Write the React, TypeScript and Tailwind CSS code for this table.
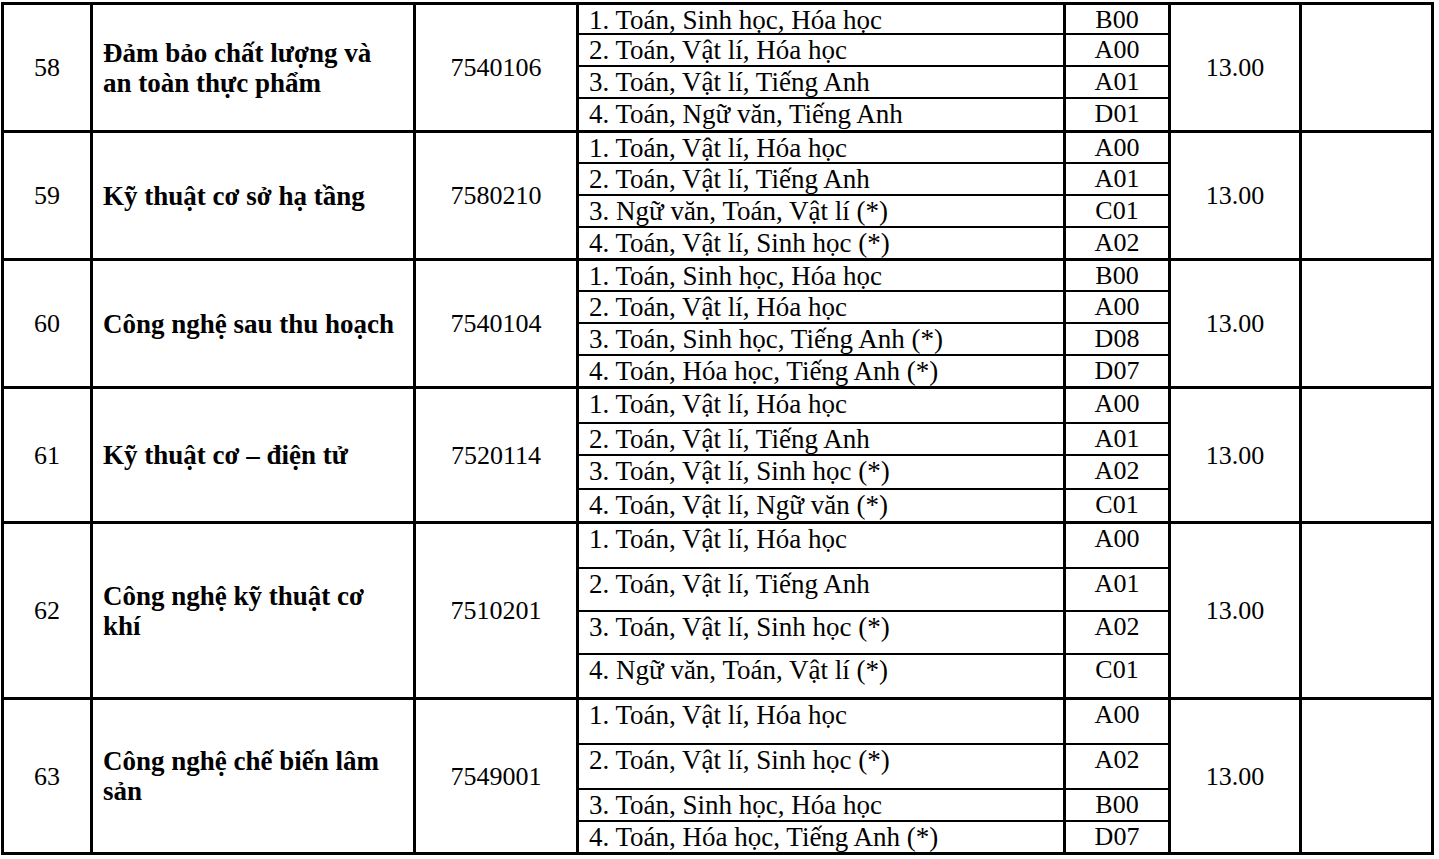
type Row = {
  no: string
  name: string[]
  code: string
  score: string
  height: number
  subs: { text: string; group: string; h?: number }[]
}

const rows: Row[] = [
  {
    no: '58',
    name: ['Đảm bảo chất lượng và', 'an toàn thực phẩm'],
    code: '7540106',
    score: '13.00',
    height: 128,
    subs: [
      { text: '1. Toán, Sinh học, Hóa học', group: 'B00', h: 30 },
      { text: '2. Toán, Vật lí, Hóa học', group: 'A00', h: 32 },
      { text: '3. Toán, Vật lí, Tiếng Anh', group: 'A01', h: 32 },
      { text: '4. Toán, Ngữ văn, Tiếng Anh', group: 'D01' },
    ],
  },
  {
    no: '59',
    name: ['Kỹ thuật cơ sở hạ tầng'],
    code: '7580210',
    score: '13.00',
    height: 128,
    subs: [
      { text: '1. Toán, Vật lí, Hóa học', group: 'A00', h: 31 },
      { text: '2. Toán, Vật lí, Tiếng Anh', group: 'A01', h: 32 },
      { text: '3. Ngữ văn, Toán, Vật lí (*)', group: 'C01', h: 32 },
      { text: '4. Toán, Vật lí, Sinh học (*)', group: 'A02' },
    ],
  },
  {
    no: '60',
    name: ['Công nghệ sau thu hoạch'],
    code: '7540104',
    score: '13.00',
    height: 128,
    subs: [
      { text: '1. Toán, Sinh học, Hóa học', group: 'B00', h: 31 },
      { text: '2. Toán, Vật lí, Hóa học', group: 'A00', h: 32 },
      { text: '3. Toán, Sinh học, Tiếng Anh (*)', group: 'D08', h: 32 },
      { text: '4. Toán, Hóa học, Tiếng Anh (*)', group: 'D07' },
    ],
  },
  {
    no: '61',
    name: ['Kỹ thuật cơ – điện tử'],
    code: '7520114',
    score: '13.00',
    height: 135,
    subs: [
      { text: '1. Toán, Vật lí, Hóa học', group: 'A00', h: 35 },
      { text: '2. Toán, Vật lí, Tiếng Anh', group: 'A01', h: 32 },
      { text: '3. Toán, Vật lí, Sinh học (*)', group: 'A02', h: 34 },
      { text: '4. Toán, Vật lí, Ngữ văn (*)', group: 'C01' },
    ],
  },
  {
    no: '62',
    name: ['Công nghệ kỹ thuật cơ', 'khí'],
    code: '7510201',
    score: '13.00',
    height: 176,
    subs: [
      { text: '1. Toán, Vật lí, Hóa học', group: 'A00', h: 45 },
      { text: '2. Toán, Vật lí, Tiếng Anh', group: 'A01', h: 43 },
      { text: '3. Toán, Vật lí, Sinh học (*)', group: 'A02', h: 43 },
      { text: '4. Ngữ văn, Toán, Vật lí (*)', group: 'C01' },
    ],
  },
  {
    no: '63',
    name: ['Công nghệ chế biến lâm', 'sản'],
    code: '7549001',
    score: '13.00',
    height: 155,
    subs: [
      { text: '1. Toán, Vật lí, Hóa học', group: 'A00', h: 45 },
      { text: '2. Toán, Vật lí, Sinh học (*)', group: 'A02', h: 45 },
      { text: '3. Toán, Sinh học, Hóa học', group: 'B00', h: 32 },
      { text: '4. Toán, Hóa học, Tiếng Anh (*)', group: 'D07' },
    ],
  },
]

function App() {
  return (
    <div className="min-h-screen bg-white pl-[1px] pt-[2px] text-black font-['Liberation_Serif',_'Times_New_Roman',_serif] text-[26px]">
      <div className="w-[1433px] border-l-[3px] border-t-[3px] border-black">
        {rows.map((row) => (
          <div
            key={row.no}
            className="flex border-b-[3px] border-black box-border"
            style={{ height: row.height }}
          >
            <div className="w-[89px] shrink-0 border-r-[3px] border-black flex items-center justify-center">
              {row.no}
            </div>
            <div className="w-[323px] shrink-0 border-r-[3px] border-black flex items-center pl-[10px] font-bold text-[27px] leading-[30px]">
              <div>
                {row.name.map((line) => (
                  <div key={line}>{line}</div>
                ))}
              </div>
            </div>
            <div className="w-[163px] shrink-0 border-r-[3px] border-black flex items-center justify-center">
              {row.code}
            </div>
            <div className="w-[592px] shrink-0 flex flex-col">
              {row.subs.map((sub, i) => {
                const last = i === row.subs.length - 1
                return (
                  <div
                    key={sub.text}
                    className={
                      'flex box-border ' +
                      (last ? 'flex-1' : 'border-b-2 border-black')
                    }
                    style={sub.h ? { height: sub.h } : undefined}
                  >
                    <div className="w-[487px] shrink-0 border-r-[3px] border-black pl-[10px] text-[27px] leading-[26px] pt-[2px] whitespace-nowrap">
                      {sub.text}
                    </div>
                    <div className="w-[105px] shrink-0 border-r-[3px] border-black text-center leading-[26px] pt-[2px]">
                      {sub.group}
                    </div>
                  </div>
                )
              })}
            </div>
            <div className="w-[131px] shrink-0 border-r-[3px] border-black flex items-center justify-center">
              {row.score}
            </div>
            <div className="w-[132px] shrink-0 border-r-[3px] border-black"></div>
          </div>
        ))}
      </div>
    </div>
  )
}

export default App
